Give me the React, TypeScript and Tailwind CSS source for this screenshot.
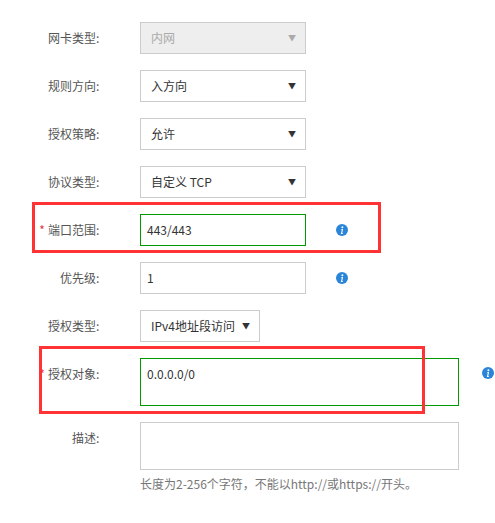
import React from "react";

const Info = () => (
  <svg width="12" height="12" viewBox="0 0 12 12">
    <circle cx="6" cy="6" r="6" fill="#2a85d8" />
    <circle cx="6.4" cy="3.2" r="1" fill="#fff" />
    <path d="M5.3 5h1.8l-0.9 4.2h0.9l-0.2 0.8h-2l0.9-4.2h-0.7z" fill="#fff" />
  </svg>
);

const Label = ({ t, req }: { t: string; req?: boolean }) => (
  <div className="w-[104px] shrink-0 text-right text-[12px] text-[#555] h-[32px] leading-[32px] pr-[2px]">
    {req && <span className="text-[#e4393c] mr-[3px]">*</span>}
    {t}:&nbsp;
  </div>
);

const Select = ({ v, disabled, w = "w-[166px]" }: { v: string; disabled?: boolean; w?: string }) => (
  <div className={`${w} h-[32px] border border-[#ccc] flex items-center justify-between pl-[10px] pr-[9px] text-[12px] ${disabled ? "bg-[#eee] text-[#aaa]" : "bg-white text-[#333]"}`}>
    <span>{v}</span>
    <span className={`text-[8px] ${disabled ? "text-[#aaa]" : "text-[#333]"}`}>▼</span>
  </div>
);

export default function App() {
  return (
    <div className="relative w-[495px] h-[523px] bg-white" style={{ fontFamily: '"Microsoft YaHei","Noto Sans CJK SC",sans-serif' }}>
      <div className="flex flex-col gap-4 pt-[22px]">
        <div className="flex gap-[36px]"><Label t="网卡类型" /><Select v="内网" disabled /></div>
        <div className="flex gap-[36px]"><Label t="规则方向" /><Select v="入方向" /></div>
        <div className="flex gap-[36px]"><Label t="授权策略" /><Select v="允许" /></div>
        <div className="flex gap-[36px]"><Label t="协议类型" /><Select v="自定义 TCP" /></div>
        <div className="flex gap-[36px] items-center">
          <Label t="端口范围" req />
          <div className="w-[166px] h-[32px] border border-[#090] px-[6px] text-[12px] text-[#333] leading-[30px]">443/443</div>
          <div className="ml-[-6px]"><Info /></div>
        </div>
        <div className="flex gap-[36px] items-center">
          <Label t="优先级" />
          <div className="w-[166px] h-[32px] border border-[#ccc] px-[6px] text-[12px] text-[#333] leading-[30px]">1</div>
          <div className="ml-[-6px]"><Info /></div>
        </div>
        <div className="flex gap-[36px]"><Label t="授权类型" /><Select v="IPv4地址段访问" w="w-[120px]" /></div>
        <div className="flex gap-[36px] items-start">
          <Label t="授权对象" req />
          <div className="w-[319px] h-[48px] border border-[#090] px-[6px] pt-[6px] text-[12px] text-[#333]">0.0.0.0/0</div>
          <div className="ml-[-13px] mt-[9px]"><Info /></div>
        </div>
        <div className="flex gap-[36px] items-start">
          <Label t="描述" />
          <div>
            <div className="w-[319px] h-[48px] border border-[#ccc]" />
            <div className="text-[12px] text-[#777] mt-[5px]">长度为2-256个字符，不能以http://或https://开头。</div>
          </div>
        </div>
      </div>
      <div className="absolute left-[32px] top-[202px] w-[349px] h-[51px] border-[3px] border-[#f33]" />
      <div className="absolute left-[39px] top-[346px] w-[386px] h-[68px] border-[3px] border-[#f33]" />
    </div>
  );
}
